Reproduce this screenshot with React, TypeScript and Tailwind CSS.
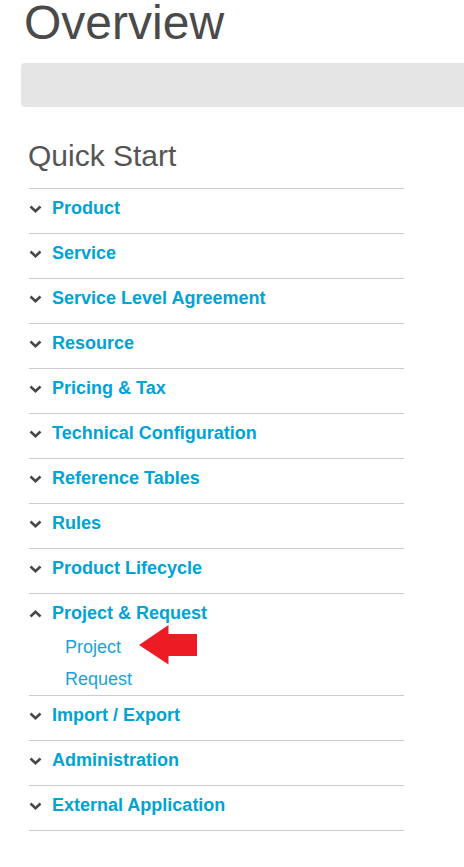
import React from "react";

const items: { label: string; open?: boolean; children?: string[] }[] = [
  { label: "Product" },
  { label: "Service" },
  { label: "Service Level Agreement" },
  { label: "Resource" },
  { label: "Pricing & Tax" },
  { label: "Technical Configuration" },
  { label: "Reference Tables" },
  { label: "Rules" },
  { label: "Product Lifecycle" },
  { label: "Project & Request", open: true, children: ["Project", "Request"] },
  { label: "Import / Export" },
  { label: "Administration" },
  { label: "External Application" },
];

function Chevron({ up }: { up?: boolean }) {
  return (
    <svg width="13" height="8" viewBox="0 0 13 8" className="shrink-0">
      <polyline
        points={up ? "1.5,6.5 6.5,1.8 11.5,6.5" : "1.5,1.5 6.5,6.2 11.5,1.5"}
        fill="none"
        stroke="#474747"
        strokeWidth="2.6"
        strokeLinecap="butt"
        strokeLinejoin="miter"
      />
    </svg>
  );
}

export default function App() {
  return (
    <div
      className="relative w-[464px] h-[867px] overflow-hidden bg-white"
      style={{ fontFamily: '"Liberation Sans", Arial, sans-serif' }}
    >
      <h1 className="ml-[24px] pt-[1px] text-[48px] leading-[44px] text-[#4a4a4a] font-normal">
        Overview
      </h1>
      <div className="ml-[21px] mt-[18px] h-[44px] w-[460px] rounded-l-[4px] bg-[#e5e5e5]" />
      <div className="ml-[29px] w-[375px]">
        <h2 className="mt-[34px] text-[30px] leading-[30px] text-[#555555] font-normal ml-[-1px]">
          Quick Start
        </h2>
        <ul className="mt-[17px] border-b border-[#cccccc]">
          {items.map((it) => (
            <li key={it.label} className="border-t border-[#cccccc]">
              <div
                className={
                  it.open
                    ? "flex items-start pt-[10px] pb-[9px]"
                    : "flex items-start pt-[10px] pb-[16px]"
                }
              >
                <div className="mt-[6px] mr-[10px]">
                  <Chevron up={it.open} />
                </div>
                <span className="text-[18px] leading-[18px] font-bold text-[#00a3d5]">
                  {it.label}
                </span>
              </div>
              {it.children && (
                <ul>
                  {it.children.map((c) => (
                    <li
                      key={c}
                      className="pl-[36px] text-[18px] leading-[32px] text-[#1aa3d6]"
                    >
                      {c}
                    </li>
                  ))}
                </ul>
              )}
            </li>
          ))}
        </ul>
      </div>
      <svg
        className="absolute left-[137px] top-[623px]"
        width="62"
        height="44"
        viewBox="137 623 62 44"
      >
        <polygon
          points="139,645 168.5,625 168.5,634 197,634 197,656 168.5,656 168.5,664.5"
          fill="#ed1c24"
        />
      </svg>
    </div>
  );
}
